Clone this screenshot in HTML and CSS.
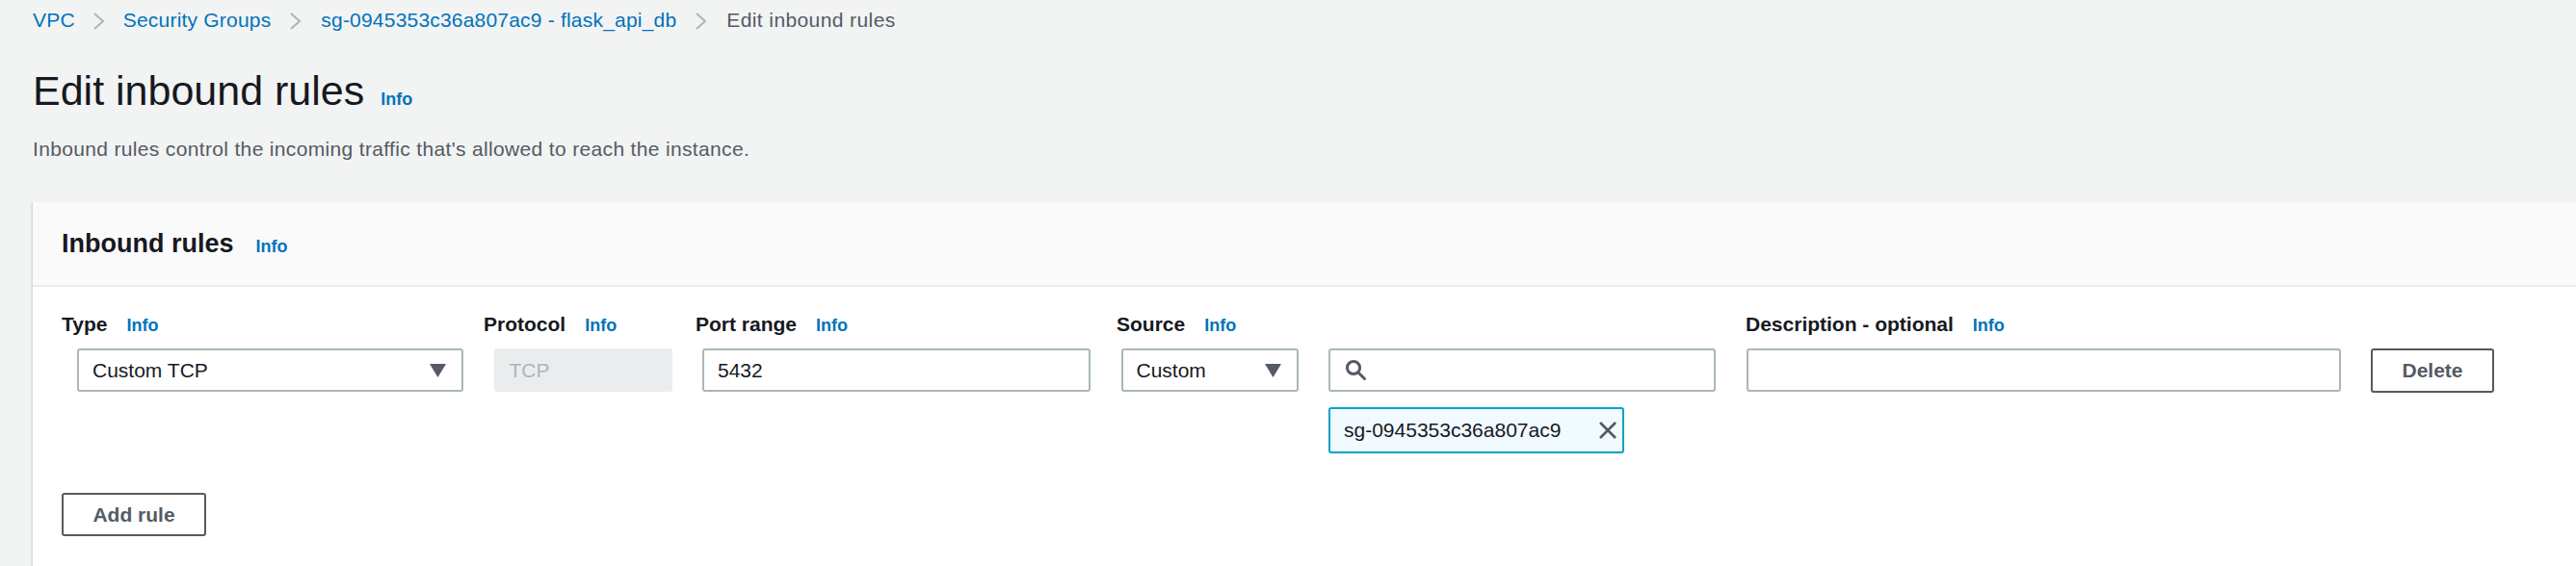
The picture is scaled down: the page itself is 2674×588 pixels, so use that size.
FILE: index.html
```html
<!DOCTYPE html>
<html lang="en">
<head>
<meta charset="utf-8">
<title>Edit inbound rules</title>
<link rel="stylesheet" href="styles.css">
</head>
<body>
<div class="page">
  <nav class="crumbs">
    <a class="crumb">VPC</a>
    <span class="chev"><svg width="13" height="18" viewBox="0 0 13 18"><polyline points="2,1 11,9 2,17" fill="none" stroke="#aab7b8" stroke-width="2"/></svg></span>
    <a class="crumb">Security Groups</a>
    <span class="chev"><svg width="13" height="18" viewBox="0 0 13 18"><polyline points="2,1 11,9 2,17" fill="none" stroke="#aab7b8" stroke-width="2"/></svg></span>
    <a class="crumb">sg-0945353c36a807ac9 - flask_api_db</a>
    <span class="chev"><svg width="13" height="18" viewBox="0 0 13 18"><polyline points="2,1 11,9 2,17" fill="none" stroke="#aab7b8" stroke-width="2"/></svg></span>
    <span class="crumb current">Edit inbound rules</span>
  </nav>

  <h1 class="title">Edit inbound rules<a class="info title-info">Info</a></h1>
  <p class="desc">Inbound rules control the incoming traffic that's allowed to reach the instance.</p>

  <section class="card">
    <header class="card-head">
      <h2 class="card-title">Inbound rules</h2>
      <a class="info head-info">Info</a>
    </header>
    <div class="card-body">
      <div class="labels">
        <div class="lbl l-type"><span>Type</span><a class="info">Info</a></div>
        <div class="lbl l-proto"><span>Protocol</span><a class="info">Info</a></div>
        <div class="lbl l-port"><span>Port range</span><a class="info">Info</a></div>
        <div class="lbl l-source"><span>Source</span><a class="info">Info</a></div>
        <div class="lbl l-desc"><span>Description - optional</span><a class="info">Info</a></div>
      </div>
      <div class="fields">
        <div class="field select w-type">
          <span>Custom TCP</span>
          <svg class="caret" width="17" height="14" viewBox="0 0 17 14"><polygon points="0,0 17,0 8.5,14" fill="#545b64"/></svg>
        </div>
        <div class="field readonly w-proto"><span>TCP</span></div>
        <div class="field w-port"><span>5432</span></div>
        <div class="field select w-source">
          <span>Custom</span>
          <svg class="caret" width="17" height="14" viewBox="0 0 17 14"><polygon points="0,0 17,0 8.5,14" fill="#545b64"/></svg>
        </div>
        <div class="search-col">
          <div class="field search">
            <svg width="23" height="23" viewBox="0 0 23 23"><circle cx="9" cy="9" r="6.6" fill="none" stroke="#545b64" stroke-width="3"/><line x1="14" y1="14" x2="20.5" y2="20.5" stroke="#545b64" stroke-width="3" stroke-linecap="round"/></svg>
          </div>
          <div class="token">
            <span>sg-0945353c36a807ac9</span>
            <svg width="20" height="20" viewBox="0 0 20 20"><line x1="2" y1="2" x2="18" y2="18" stroke="#545b64" stroke-width="2.6"/><line x1="18" y1="2" x2="2" y2="18" stroke="#545b64" stroke-width="2.6"/></svg>
          </div>
        </div>
        <div class="field w-desc"></div>
        <button class="btn w-del">Delete</button>
      </div>
      <button class="btn add">Add rule</button>
    </div>
  </section>
</div>
</body>
</html>
```

FILE: styles.css
```css
* { box-sizing: border-box; }

html, body {
  margin: 0;
  padding: 0;
  background: #f2f3f3;
  overflow: hidden;
}

body {
  font-family: "Liberation Sans", Arial, sans-serif;
  font-size: 21px;
  color: #16191f;
}

.page {
  padding: 6px 0 0 34px;
}

.crumbs {
  display: flex;
  align-items: center;
  height: 30px;
  line-height: 30px;
  letter-spacing: 0.2px;
}

.crumb {
  color: #0073bb;
  text-decoration: none;
}

.crumb.current {
  color: #545b64;
  letter-spacing: 0.4px;
}

.chev {
  display: flex;
  align-items: center;
  margin: 1px 20px 0 19px;
}

.chev:nth-of-type(1) {
  margin-left: 18px;
  margin-right: 19px;
}

.title {
  margin: 31px 0 0 0;
  font-size: 43px;
  font-weight: 400;
  line-height: 54px;
  height: 54px;
  color: #16191f;
}

.info {
  color: #0073bb;
  font-size: 18px;
  font-weight: 700;
  line-height: 1;
  letter-spacing: 0;
  text-decoration: none;
}

.title-info {
  margin-left: 17px;
}

.desc {
  margin: 19px 0 0 0;
  line-height: 30px;
  letter-spacing: 0.34px;
  color: #545b64;
}

.card {
  margin: 40px -40px 0 -1px;
  background: #ffffff;
  border-left: 1px solid #d5dbdb;
  box-shadow: 0 1px 2px 0 rgba(0, 28, 36, 0.2);
  min-height: 420px;
}

.card-head {
  display: flex;
  align-items: baseline;
  background: #fafafa;
  padding: 25px 0 25px 30px;
  border-bottom: 2px solid #eaeded;
  height: 88px;
}

.card-title {
  margin: 0;
  font-size: 27px;
  font-weight: 700;
  line-height: 36px;
}

.head-info {
  margin-left: 23px;
}

.card-body {
  padding: 24px 0 0 30px;
}

.labels {
  display: flex;
  height: 30px;
  line-height: 30px;
  font-weight: 700;
}

.lbl {
  display: flex;
  align-items: baseline;
  flex: none;
}

.lbl .info {
  margin-left: 20px;
}

.l-type { width: 438px; }
.l-proto { width: 220px; }
.l-port { width: 437px; }
.l-source { width: 653px; }

.fields {
  display: flex;
  align-items: flex-start;
  gap: 31.5px;
  margin: 10px 0 0 16px;
}

.field {
  flex: none;
  display: flex;
  align-items: center;
  height: 45px;
  padding: 0 14px;
  border: 2px solid #aab7b8;
  border-radius: 3px;
  background: #ffffff;
  color: #16191f;
}

.select {
  justify-content: space-between;
  padding-right: 16px;
}

.readonly {
  background: #eaeded;
  border-color: #eaeded;
  color: #aab7b8;
}

.w-type { width: 401px; }
.w-proto { width: 185px; }
.w-port { width: 403px; }
.w-source { width: 184px; }
.w-desc { width: 617px; }

.search-col {
  flex: none;
  display: flex;
  flex-direction: column;
  gap: 16px;
  width: 402px;
}

.search {
  width: 402px;
  padding-left: 15px;
}

.token {
  display: flex;
  align-items: center;
  justify-content: space-between;
  width: 307px;
  height: 48px;
  padding: 0 5px 0 14px;
  border: 2px solid #00a1c9;
  border-radius: 3px;
  background: #f1faff;
  color: #16191f;
}

.btn {
  flex: none;
  height: 46px;
  border: 2px solid #545b64;
  border-radius: 3px;
  background: #ffffff;
  color: #545b64;
  font-family: "Liberation Sans", Arial, sans-serif;
  font-size: 21px;
  font-weight: 700;
  padding: 0;
}

.w-del { width: 128px; }

.add {
  display: block;
  width: 150px;
  height: 45px;
  margin-top: 41px;
}
```
